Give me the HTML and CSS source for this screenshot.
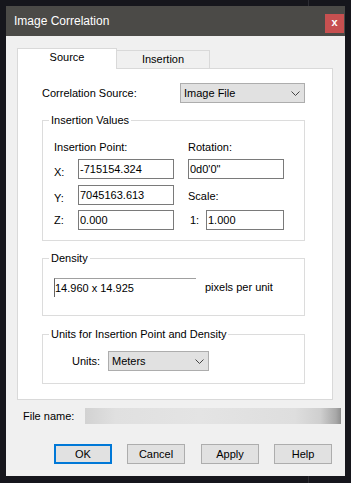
FILE: index.html
```html
<!DOCTYPE html>
<html lang="en">
<head>
    <meta charset="UTF-8">
    <meta name="viewport" content="width=device-width, initial-scale=1.0">
    <title>Image Correlation</title>
    <link rel="stylesheet" href="styles.css">
</head>
<body>
    <div class="window">
        <div class="titlebar">
            <span class="title">Image Correlation</span>
            <span class="close">x</span>
        </div>

        <div class="dialog">
            <div class="tabs">
                <div class="tab active">Source</div>
                <div class="tab">Insertion</div>
            </div>

            <div class="panel">
                <div class="source-row">
                    <span>Correlation Source:</span>
                    <div class="select source-select">
                        <span>Image File</span>
                        <svg width="9" height="5" viewBox="0 0 9 5"><polyline points="0.5,0.5 4.5,4.5 8.5,0.5" fill="none" stroke="#444" stroke-width="1"/></svg>
                    </div>
                </div>

                <fieldset class="group insertion">
                    <legend>Insertion Values</legend>
                    <div class="ins-grid">
                        <span class="span2">Insertion Point:</span>
                        <span class="right-col">Rotation:</span>

                        <span class="axis">X:</span>
                        <input class="field" type="text" value="-715154.324" readonly>
                        <input class="field right-col" type="text" value="0d0'0&quot;" readonly>

                        <span class="axis">Y:</span>
                        <input class="field" type="text" value="7045163.613" readonly>
                        <span class="right-col scale-label">Scale:</span>

                        <span class="axis">Z:</span>
                        <input class="field" type="text" value="0.000" readonly>
                        <div class="right-col scale-row">
                            <span>1:</span>
                            <input class="field scale" type="text" value="1.000" readonly>
                        </div>
                    </div>
                </fieldset>

                <fieldset class="group density">
                    <legend>Density</legend>
                    <div class="density-row">
                        <div class="density-field">14.960 x 14.925</div>
                        <span>pixels per unit</span>
                    </div>
                </fieldset>

                <fieldset class="group units">
                    <legend>Units for Insertion Point and Density</legend>
                    <div class="units-row">
                        <span class="units-label">Units:</span>
                        <div class="select units-select">
                            <span>Meters</span>
                            <svg width="9" height="5" viewBox="0 0 9 5"><polyline points="0.5,0.5 4.5,4.5 8.5,0.5" fill="none" stroke="#444" stroke-width="1"/></svg>
                        </div>
                    </div>
                </fieldset>
            </div>

            <div class="file-row">
                <span class="file-label">File name:</span>
                <div class="file-bar"></div>
            </div>

            <div class="buttons">
                <button class="btn default">OK</button>
                <button class="btn">Cancel</button>
                <button class="btn apply">Apply</button>
                <button class="btn">Help</button>
            </div>
        </div>
    </div>
</body>
</html>
```

FILE: styles.css
```css
body {
    margin: 0;
    height: 483px;
    background:
        linear-gradient(to right, transparent 308px, #2c2c33 308px, #2c2c33 309px, transparent 309px),
        #16161c;
    font-family: "Liberation Sans", Arial, sans-serif;
    font-size: 11px;
    line-height: 13px;
    color: #000;
    overflow: hidden;
}
.window {
    margin: 6px 0 0 6px;
    width: 339px;
    height: 470px;
    background-color: #f0f0f0;
}
.titlebar {
    height: 30px;
    background-color: #4b4a47;
    display: flex;
    align-items: center;
    justify-content: space-between;
    padding-left: 8px;
    box-sizing: border-box;
}
.title {
    color: #fff;
    font-size: 12px;
    line-height: 15px;
    margin-top: 1px;
}
.close {
    width: 19px;
    height: 19px;
    margin: 5px 1px 0 0;
    background-color: #c75050;
    color: #fff;
    font-weight: bold;
    font-size: 11px;
    line-height: 17px;
    text-align: center;
}
.dialog {
    padding: 12px 4px 0 11px;
}
.tabs {
    display: flex;
    align-items: flex-end;
    height: 21px;
    margin-bottom: -1px;
}
.tab {
    box-sizing: border-box;
    text-align: center;
    border: 1px solid #d9d9d9;
    border-bottom: none;
}
.tab.active {
    width: 100px;
    height: 21px;
    padding-top: 2px;
    background-color: #fff;
    position: relative;
    z-index: 1;
}
.tab:not(.active) {
    width: 93px;
    height: 18px;
    margin-bottom: 1px;
    padding-top: 2px;
    border-left: none;
    background-color: #f0f0f0;
}
.panel {
    width: 316px;
    height: 332px;
    box-sizing: border-box;
    background-color: #fff;
    border: 1px solid #d9d9d9;
    padding: 14px 27px 0 24px;
}
.source-row {
    display: flex;
    align-items: center;
    justify-content: space-between;
    height: 20px;
}
.select {
    box-sizing: border-box;
    height: 20px;
    background-color: #e1e1e1;
    border: 1px solid #adadad;
    display: flex;
    align-items: center;
    justify-content: space-between;
    padding: 0 4px 0 3px;
}
.select svg {
    display: block;
}
.source-select {
    width: 125px;
}
.group {
    margin: 0;
    min-width: 0;
    border: 1px solid #dcdcdc;
    padding: 0 0 0 6px;
}
.group legend {
    padding: 0 2px;
    line-height: 13px;
}
.insertion {
    margin-top: 11px;
    padding-bottom: 10px;
}
.ins-grid {
    display: grid;
    grid-template-columns: 24px 110px 96px;
    grid-template-rows: 18px 26px 25px 20px;
    align-items: start;
    margin: 14px 0 0 5px;
}
.span2 {
    grid-column: 1 / 3;
}
.right-col {
    grid-column: 3;
}
.axis {
    align-self: center;
    padding-top: 1px;
}
.field {
    box-sizing: border-box;
    width: 96px;
    height: 20px;
    margin: 0;
    padding: 0 1px;
    border: 1px solid #7a7a7a;
    background-color: #fff;
    font-family: inherit;
    font-size: 11px;
    color: #000;
    outline: none;
}
.scale-label {
    padding-top: 5px;
}
.scale-row {
    display: flex;
    align-items: center;
    justify-content: space-between;
    padding-left: 2px;
}
.field.scale {
    width: 78px;
}
.density {
    margin-top: 11px;
    padding-bottom: 18px;
}
.density-row {
    display: flex;
    align-items: center;
    margin: 13px 0 0 5px;
}
.density-field {
    width: 142px;
    height: 19px;
    box-sizing: border-box;
    border-top: 1px solid #a0a0a0;
    border-left: 1px solid #646464;
    padding: 3px 0 0 0;
    margin-right: 9px;
}
.units {
    margin-top: 12px;
    padding-bottom: 12px;
}
.units-row {
    display: flex;
    align-items: center;
    margin: 10px 0 0 23px;
}
.units-label {
    width: 36px;
}
.units-select {
    width: 101px;
}
.file-row {
    display: flex;
    align-items: center;
    margin-top: 8px;
    height: 16px;
}
.file-label {
    width: 62px;
    padding-left: 6px;
    padding-top: 1px;
}
.file-bar {
    width: 256px;
    height: 16px;
    background: linear-gradient(to right, #d2d2d2 0%, #e0e0e0 12%, #e4e4e4 45%, #dedede 82%, #cfcfcf 92%, #a8a8a8 98%, #8f8f8f 100%);
}
.buttons {
    display: flex;
    gap: 15px;
    margin-top: 20px;
    padding-left: 37px;
}
.btn {
    box-sizing: border-box;
    width: 58px;
    height: 20px;
    margin: 0;
    padding: 0;
    background-color: #e1e1e1;
    border: 1px solid #adadad;
    font-family: inherit;
    font-size: 11px;
    color: #000;
}
.btn.default {
    border: 2px solid #0078d7;
}
.btn.apply {
    margin-left: 1px;
}
```
